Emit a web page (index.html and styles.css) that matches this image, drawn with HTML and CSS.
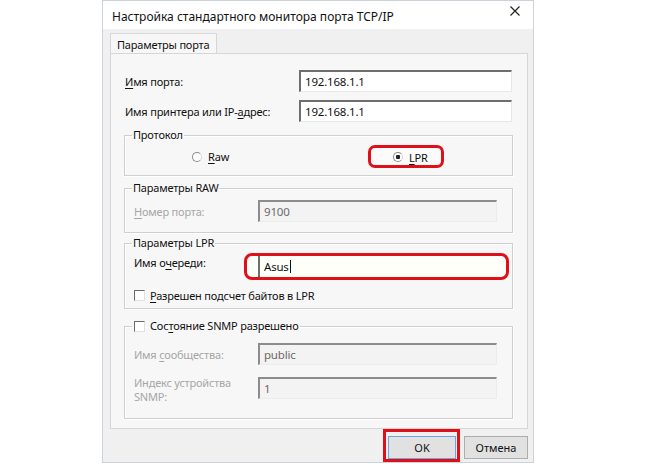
FILE: index.html
```html
<!DOCTYPE html>
<html lang="ru">
<head>
    <meta charset="UTF-8">
    <title>Настройка стандартного монитора порта TCP/IP</title>
    <link rel="stylesheet" href="styles.css">
</head>
<body>
    <div class="dialog">
        <div class="titlebar">
            <span class="title">Настройка стандартного монитора порта TCP/IP</span>
            <svg class="close" width="10" height="10" viewBox="0 0 10 10">
                <path d="M0.5 0.5 L9.5 9.5 M9.5 0.5 L0.5 9.5" stroke="#222" stroke-width="1.2" fill="none"/>
            </svg>
        </div>
        <div class="body">
            <div class="tabs">
                <div class="tab">Параметры порта</div>
            </div>
            <div class="panel">
                <div class="row">
                    <span class="label"><u>И</u>мя порта:</span>
                    <div class="field">192.168.1.1</div>
                </div>
                <div class="row row-next">
                    <span class="label">Имя принтера или IP-<u>а</u>дрес:</span>
                    <div class="field">192.168.1.1</div>
                </div>

                <fieldset class="group group-protocol">
                    <legend>Протокол</legend>
                    <div class="radios">
                        <span class="option option-raw"><span class="radio"></span><span><u>R</u>aw</span></span>
                        <span class="mark mark-lpr"><span class="radio checked"></span><span><u>L</u>PR</span></span>
                    </div>
                </fieldset>

                <fieldset class="group group-raw">
                    <legend>Параметры RAW</legend>
                    <div class="row">
                        <span class="label label-group disabled"><u>Н</u>омер порта:</span>
                        <div class="field field-group field-disabled">9100</div>
                    </div>
                </fieldset>

                <fieldset class="group group-lpr">
                    <legend>Параметры LPR</legend>
                    <div class="row">
                        <span class="label label-queue">Имя о<u>ч</u>ереди:</span>
                        <div class="mark mark-queue"><span class="caret-field">Asus</span></div>
                    </div>
                    <div class="check-row">
                        <span class="checkbox"></span><span><u>Р</u>азрешен подсчет байтов в LPR</span>
                    </div>
                </fieldset>

                <fieldset class="group group-snmp">
                    <legend><span class="checkbox"></span><span>Сос<u>т</u>ояние SNMP разрешено</span></legend>
                    <div class="row">
                        <span class="label label-group disabled">Имя <u>с</u>ообщества:</span>
                        <div class="field field-group field-disabled">public</div>
                    </div>
                    <div class="row row-index">
                        <span class="label label-group label-two disabled">Индекс устройства<br>SNMP:</span>
                        <div class="field field-group field-disabled">1</div>
                    </div>
                </fieldset>
            </div>
            <div class="footer">
                <div class="mark mark-ok"><button class="btn btn-default">OK</button></div>
                <button class="btn btn-cancel">Отмена</button>
            </div>
        </div>
    </div>
</body>
</html>
```

FILE: styles.css
```css
body {
    margin: 0;
    background: #fff;
    font-family: "Noto Sans", "Liberation Sans", sans-serif;
    font-size: 11px;
    letter-spacing: -0.2px;
    color: #111;
}

u {
    text-decoration: underline;
    text-underline-offset: 2px;
}

.dialog {
    box-sizing: border-box;
    width: 432px;
    height: 463px;
    margin-left: 102px;
    border: 1px solid #cdd3da;
    background: #f0f0f0;
}

.titlebar {
    height: 28px;
    background: #fff;
    display: flex;
    align-items: center;
    justify-content: space-between;
    padding: 0 9px 0 9px;
}

.title {
    margin-top: 2px;
    font-size: 12px;
    letter-spacing: 0;
}

.close {
    margin-top: -8px;
    margin-right: 4px;
}

.body {
    padding: 4px 5px 0 7px;
}

.tabs {
    display: flex;
    height: 20px;
}

.tab {
    position: relative;
    z-index: 1;
    height: 20px;
    box-sizing: border-box;
    padding: 2px 7px 0 6px;
    border: 1px solid #d6d6d6;
    border-bottom: none;
    background: #f7f7f7;
    font-size: 11px;
    line-height: 17px;
}

.panel {
    box-sizing: border-box;
    height: 376px;
    border: 1px solid #d6d6d6;
    background: #f7f7f7;
    padding: 16px 14px 0 13px;
}

.row {
    display: flex;
    align-items: center;
}

.row-next {
    margin-top: 8px;
}

.label {
    width: 175px;
    padding-left: 1px;
    box-sizing: border-box;
    flex: none;
}

.field {
    box-sizing: border-box;
    width: 213px;
    height: 22px;
    padding: 2px 0 0 4px;
    border-style: solid;
    border-width: 2px 1px 1px 2px;
    border-color: #6e6e6e #e8e8e8 #e8e8e8 #6e6e6e;
    background: #fff;
    line-height: 16px;
    font-size: 11.5px;
}

.group {
    margin: 0;
    padding: 0 14px 0 9px;
    border: 1px solid #cfcfcf;
    box-shadow: 1px 1px 0 #fff, inset 1px 1px 0 #fff;
    min-width: 0;
}

.group legend {
    margin-left: -2px;
    padding: 0 1px;
    line-height: 16px;
    display: flex;
    align-items: center;
}

.group-protocol {
    margin-top: 5px;
    padding-top: 2px;
    padding-bottom: 7px;
}

.group-raw {
    margin-top: 4px;
    padding-top: 4px;
    padding-bottom: 10px;
}

.group-lpr {
    margin-top: 2px;
    padding-top: 2px;
    padding-bottom: 5px;
}

.group-snmp {
    margin-top: 9px;
    padding-top: 9px;
    padding-bottom: 14px;
}

.radios {
    display: flex;
    align-items: center;
    height: 23px;
    padding-left: 58px;
}

.option {
    flex: 0 0 176px;
    display: flex;
    align-items: center;
}

.radio {
    box-sizing: border-box;
    width: 10px;
    height: 10px;
    margin-right: 6px;
    border: 1px solid #8a8a8a;
    border-right-color: #d8d8d8;
    border-radius: 50%;
    background: #fff;
}

.radio.checked {
    background: radial-gradient(circle, #222 0 2px, #fff 2.5px);
}

.mark {
    box-sizing: border-box;
    border: 3px solid #e0101b;
}

.mark-lpr {
    display: flex;
    align-items: center;
    height: 23px;
    padding: 1px 13px 0 22px;
    border-radius: 7px;
    background: #fbfbfb;
}

.label-group {
    width: 124px;
    padding-left: 0;
}

.disabled {
    color: #a6a6a6;
}

.field-group {
    width: 239px;
}

.field-disabled {
    background: #f3f3f3;
    color: #6a6a6a;
    border-color: #8c8c8c #ececec #ececec #8c8c8c;
}

.label-queue {
    width: 110px;
    padding-left: 0;
    align-self: flex-start;
    margin-top: 2px;
}

.mark-queue {
    flex: none;
    width: 265px;
    height: 27px;
    padding-left: 11px;
    border-radius: 8px;
    background: #fffffa;
    display: flex;
    align-items: center;
}

.caret-field {
    height: 21px;
    padding-left: 4px;
    border-left: 2px solid #6e6e6e;
    line-height: 21px;
    font-size: 11.5px;
}

.caret-field::after {
    content: "";
    display: inline-block;
    width: 1px;
    height: 13px;
    margin-left: 1px;
    vertical-align: -2px;
    background: #111;
}

.check-row {
    display: flex;
    align-items: center;
    height: 16px;
    margin-top: 7px;
}

.checkbox {
    box-sizing: border-box;
    width: 11px;
    height: 11px;
    margin-right: 5px;
    border-style: solid;
    border-width: 1px;
    border-color: #6a6a6a #e0e0e0 #e0e0e0 #6a6a6a;
    background: #fff;
}

.group-snmp legend .checkbox {
    margin-left: 1px;
}

.row-index {
    margin-top: 12px;
    align-items: flex-start;
}

.label-two {
    line-height: 14px;
    margin-top: -1px;
}

.footer {
    display: flex;
    justify-content: flex-end;
    align-items: flex-start;
    gap: 4px;
}

.mark-ok {
    padding: 4px 1px 0 2px;
}

.btn {
    box-sizing: border-box;
    height: 23px;
    padding: 0;
    font-family: inherit;
    font-size: 11px;
    color: #111;
    background: #e1e1e1;
    border: 1px solid #adadad;
}

.btn-default {
    width: 68px;
    border-color: #6aa7e2;
}

.btn-cancel {
    width: 64px;
    margin-top: 7px;
}
```
